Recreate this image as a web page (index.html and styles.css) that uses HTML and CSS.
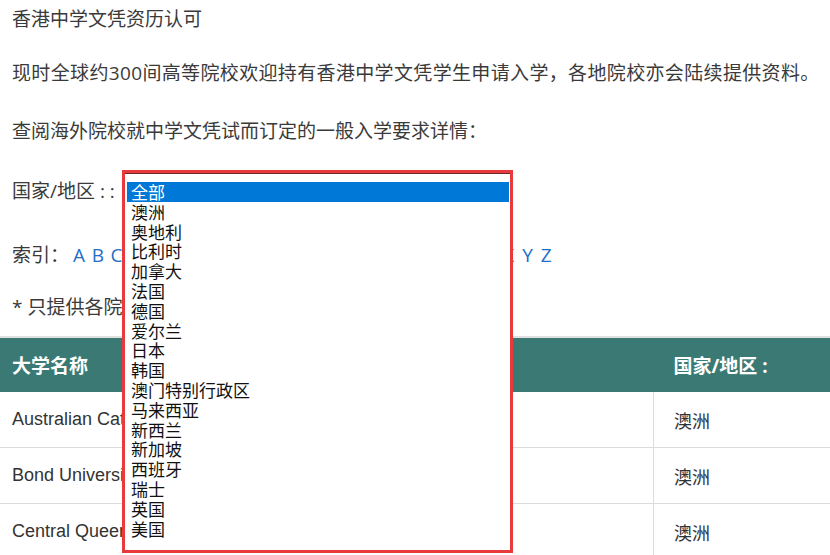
FILE: index.html
```html
<!DOCTYPE html>
<html lang="zh-CN">
<head>
<meta charset="utf-8">
<title>香港中学文凭资历认可</title>
<link rel="stylesheet" href="styles.css">
</head>
<body>
<div class="page">
  <p class="line l1">香港中学文凭资历认可</p>
  <p class="line l2">现时全球约300间高等院校欢迎持有香港中学文凭学生申请入学，各地院校亦会陆续提供资料。</p>
  <p class="line l3">查阅海外院校就中学文凭试而订定的一般入学要求详情：</p>
  <div class="line l4">国家/地区 : :</div>
  <div class="line l5"><span class="label">索引：</span><span class="letters"><a>A</a><a>B</a><a>C</a><a>D</a><a>E</a><a>F</a><a>G</a><a>H</a><a>I</a><a>J</a><a>K</a><a>L</a><a>M</a><a>N</a><a>O</a><a>P</a><a>Q</a><a>R</a><a>S</a><a>T</a><a>U</a><a>V</a><a>W</a><a>X</a><a>Y</a><a>Z</a></span></div>
  <p class="line l6">* 只提供各院校的英文名称</p>
  <table class="unis">
    <thead>
      <tr><th class="c1">大学名称</th><th class="c2">国家/地区 :</th></tr>
    </thead>
    <tbody>
      <tr><td class="c1">Australian Catholic University</td><td class="c2">澳洲</td></tr>
      <tr><td class="c1">Bond University</td><td class="c2">澳洲</td></tr>
      <tr><td class="c1">Central Queensland University</td><td class="c2">澳洲</td></tr>
    </tbody>
  </table>
</div>
<div class="popup">
  <ul class="options">
    <li class="sel">全部</li>
    <li>澳洲</li>
    <li>奥地利</li>
    <li>比利时</li>
    <li>加拿大</li>
    <li>法国</li>
    <li>德国</li>
    <li>爱尔兰</li>
    <li>日本</li>
    <li>韩国</li>
    <li>澳门特别行政区</li>
    <li>马来西亚</li>
    <li>新西兰</li>
    <li>新加坡</li>
    <li>西班牙</li>
    <li>瑞士</li>
    <li>英国</li>
    <li>美国</li>
  </ul>
</div>
</body>
</html>
```

FILE: styles.css
```css
html, body {
  margin: 0;
  padding: 0;
  background: #fff;
  overflow: hidden;
}
body {
  font-family: "Open Sans", "Noto Sans CJK SC", sans-serif;
  font-size: 19px;
  color: #3a3a3a;
}
.page {
  display: flex;
  flex-direction: column;
  padding-top: 5px;
}
.line {
  margin: 0;
  padding-left: 12px;
  line-height: 28px;
  white-space: nowrap;
}
.l1 { margin-top: 0; }
.l2 { margin-top: 26px; letter-spacing: 0.35px; }
.l3 { margin-top: 30px; }
.l4 { margin-top: 32px; }
.l5 { margin-top: 36px; display: flex; align-items: center; }
.l6 { margin-top: 24px; }
.label { width: 61px; }
.letters { display: flex; gap: 6.7px; }
.letters a {
  color: #1f6fc6;
  font-family: "Open Sans", sans-serif;
  font-size: 19px;
  width: 12px;
  text-align: center;
}
.unis {
  margin-top: 15px;
  width: 100%;
  border-collapse: collapse;
  border-top: 2px solid #e0e0e0;
}
.unis th {
  background: #3b7a74;
  color: #fff;
  font-weight: bold;
  text-align: left;
  height: 54px;
  padding: 0;
  font-size: 19px;
}
.unis td {
  height: 55px;
  padding: 0;
  border-bottom: 1px solid #dcdcdc;
  font-family: "Liberation Sans", "Noto Sans CJK SC", sans-serif;
  font-size: 18px;
  color: #333;
  white-space: nowrap;
}
.unis .c1 { width: 641px; padding-left: 12px; }
.unis .c2 { padding-left: 20px; }
.unis td.c2 {
  border-left: 1px solid #dcdcdc;
  font-family: "Noto Sans CJK SC", sans-serif;
}
.popup {
  position: absolute;
  left: 122px;
  top: 170px;
  width: 391px;
  height: 383px;
  box-sizing: border-box;
  border: 3px solid #e8393c;
  background: #fff;
  box-shadow: inset 0 1px 0 #6b2b2b;
  padding: 9px 1px 0 2px;
}
.options {
  list-style: none;
  margin: 0;
  padding: 0;
  font-family: "Noto Sans CJK SC", sans-serif;
  font-size: 17px;
  color: #111;
}
.options li {
  height: 19.8px;
  line-height: 19.8px;
  padding-left: 4px;
}
.options li.sel {
  background: #0078d7;
  color: #fff;
}
```
